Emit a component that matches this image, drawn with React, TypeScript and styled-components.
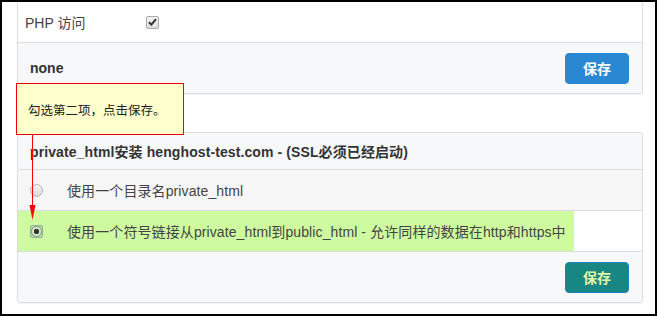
import React from 'react';
import styled, { createGlobalStyle } from 'styled-components'

const GlobalStyle = createGlobalStyle`
  body {
    margin: 0;
    font-family: "Liberation Sans", "Noto Sans CJK SC", sans-serif;
    color: #333;
  }
`

const Frame = styled.div`
  position: relative;
  width: 657px;
  height: 316px;
  box-sizing: border-box;
  border: 2px solid #000;
  background: #fff;
  padding: 0 12px 0 15px;
  overflow: hidden;
`
const Panel = styled.div<{ $cut?: boolean; $gap?: number }>`
  border: 1px solid #ddd;
  border-top-width: ${p => (p.$cut ? 0 : 1)}px;
  border-radius: ${p => (p.$cut ? '0 0 3px 3px' : '3px')};
  margin-top: ${p => p.$gap || 0}px;
  background: #fff;
  box-shadow: 0 1px 1px rgba(0, 0, 0, 0.05);
  overflow: hidden;
`
const FieldRow = styled.div`
  display: flex;
  align-items: center;
  height: 40px;
  padding-left: 7px;
  border-bottom: 1px solid #ddd;
  font-size: 14px;
`
const FieldLabel = styled.span`
  width: 121px;
  color: #444;
`
const CheckBox = styled.span`
  width: 11px;
  height: 11px;
  border: 1px solid #a9a9a9;
  border-radius: 2px;
  background: linear-gradient(#f4f4f4, #dedede);
  display: flex;
  align-items: center;
  justify-content: center;
`
const Footer = styled.div`
  height: 50px;
  display: flex;
  align-items: center;
  justify-content: space-between;
  padding: 0 13px 0 12px;
  background: #f7f8fa;
`
const Title = styled.span`
  font-weight: bold;
  font-size: 14px;
`
const Button = styled.button<{ $bg: string; $fg: string; $edge: string }>`
  width: 64px;
  height: 31px;
  border: 1px solid ${p => p.$edge};
  border-radius: 4px;
  background: ${p => p.$bg};
  color: ${p => p.$fg};
  font-family: "Noto Sans CJK SC", sans-serif;
  font-weight: bold;
  font-size: 14px;
  padding: 0;
`
const Header = styled.div`
  height: 36px;
  display: flex;
  align-items: center;
  padding-left: 12px;
  background: #f7f8fa;
  border-bottom: 1px solid #ddd;
  font-weight: bold;
  font-size: 14px;
  letter-spacing: 0.1px;
`
const OptionRow = styled.div<{ $bg: string }>`
  height: 40px;
  display: flex;
  background: ${p => p.$bg};
  border-bottom: 1px solid #ddd;
  font-size: 14px;
`
const Mark = styled.div<{ $on?: boolean }>`
  display: flex;
  align-items: center;
  padding-left: 12px;
  width: ${p => (p.$on ? '544px' : 'auto')};
  background: ${p => (p.$on ? '#cefb9f' : 'transparent')};
`
const RadioBox = styled.span<{ $on?: boolean }>`
  width: 13px;
  height: 13px;
  box-sizing: border-box;
  margin-right: 24px;
  display: flex;
  align-items: center;
  justify-content: center;
  border: ${p => (p.$on ? '1px solid #8fb59a' : 'none')};
  border-radius: 2px;
  background: ${p => (p.$on ? '#b7d9b0' : 'transparent')};
`
const Radio = styled.span<{ $on?: boolean }>`
  width: ${p => (p.$on ? 9 : 11)}px;
  height: ${p => (p.$on ? 9 : 11)}px;
  border-radius: 50%;
  border: 1px solid ${p => (p.$on ? '#7f9a78' : '#b5b5b5')};
  background: ${p => (p.$on ? 'radial-gradient(circle, #2f3a2f 0 2.5px, #dfe9c8 3px)' : 'linear-gradient(#f3f3f3, #dadada)')};
`
const OptionText = styled.span`
  color: #444;
  letter-spacing: 0.1px;
`
const Callout = styled.div`
  position: absolute;
  left: 14px;
  top: 81px;
  width: 168px;
  height: 52px;
  box-sizing: border-box;
  border: 1px solid #e00;
  background: #ffffcc;
  display: flex;
  align-items: center;
  padding-left: 11px;
  font-family: "Noto Sans CJK SC", sans-serif;
  font-size: 12.5px;
  color: #222;
`
const Arrow = styled.svg`
  position: absolute;
  left: 25px;
  top: 133px;
`

const App = () => {
  return (
    <Frame>
      <GlobalStyle />
      <Panel $cut>
        <FieldRow>
          <FieldLabel>PHP 访问</FieldLabel>
          <CheckBox>
            <svg width="9" height="8" viewBox="0 0 9 8">
              <path d="M1 4.2 L3.4 6.6 L8 1.2" fill="none" stroke="#333" strokeWidth="2" />
            </svg>
          </CheckBox>
        </FieldRow>
        <Footer>
          <Title>none</Title>
          <Button $bg="#2a88d2" $fg="#fff" $edge="#2a88d2">保存</Button>
        </Footer>
      </Panel>

      <Panel $gap={38}>
        <Header>private_html安装 henghost-test.com - (SSL必须已经启动)</Header>
        <OptionRow $bg="#f6f6f6">
          <Mark>
            <RadioBox><Radio /></RadioBox>
            <OptionText>使用一个目录名private_html</OptionText>
          </Mark>
        </OptionRow>
        <OptionRow $bg="#fff">
          <Mark $on>
            <RadioBox $on><Radio $on /></RadioBox>
            <OptionText>使用一个符号链接从private_html到public_html - 允许同样的数据在http和https中</OptionText>
          </Mark>
        </OptionRow>
        <Footer>
          <span />
          <Button $bg="#188682" $fg="#e2f7a4" $edge="#1f7fbf">保存</Button>
        </Footer>
      </Panel>

      <Callout>勾选第二项，点击保存。</Callout>
      <Arrow width="11" height="86" viewBox="0 0 11 86">
        <line x1="5.5" y1="0" x2="5.5" y2="72" stroke="#f00" strokeWidth="1" />
        <path d="M2.5 70 L8.5 70 L5.5 85 Z" fill="#f00" />
      </Arrow>
    </Frame>
  );
}

export default App;
